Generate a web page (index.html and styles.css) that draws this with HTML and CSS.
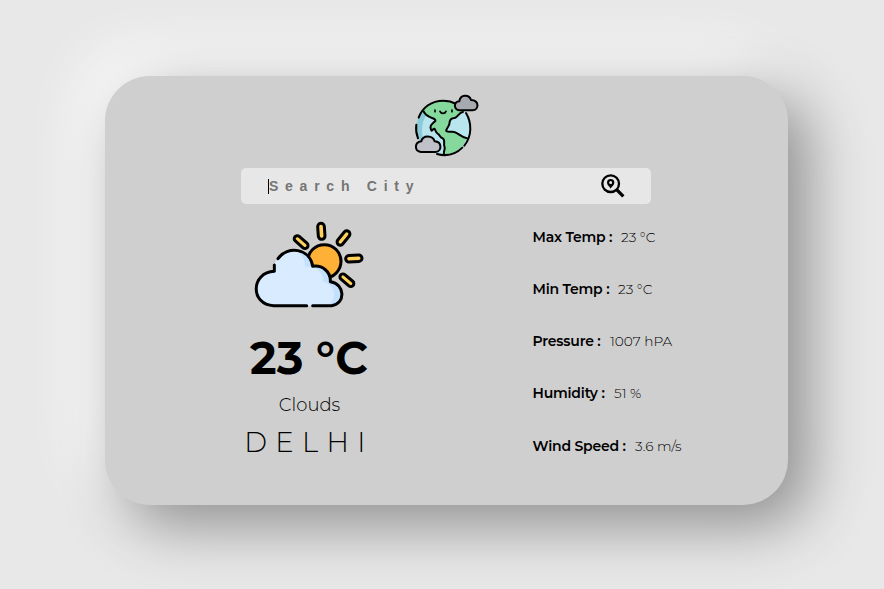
FILE: index.html
```html
<!DOCTYPE html>
<html lang="en">
<head>
<meta charset="utf-8">
<title>Weather</title>
<link rel="stylesheet" href="styles.css">
</head>
<body>
<main class="card">
  <svg class="logo" viewBox="0 0 255 225" fill="none" stroke="#000" stroke-width="6" stroke-linecap="round" stroke-linejoin="round">
    <circle cx="115" cy="119" r="81" fill="#b9e6ee" stroke="none"/>
    <path d="M52 68C26 102 29 150 58 177L64 176C47 145 46 106 66 78Z" fill="#8bcbd9" stroke="none"/>
    <path d="M55 68C70 45 92 38 116 38C137 38 157 45 172 58L172 73C159 75 158 87 147 90C136 91 133 100 133 109C131 117 125 121 124 129C131 134 142 129 151 132C164 137 174 148 185 151C174 181 148 199 118 200C113 190 122 182 118 174C118 164 121 157 114 150C105 146 100 141 96 131C89 128 91 120 83 128L80 130C72 120 78 112 85 106C94 100 94 95 84 92C71 91 59 82 55 68Z" fill="#86d99d" stroke="none"/>
    <path d="M41 89C52 58 80 38 115 38C130 38 143 42 154 48M183 75C201 105 201 145 178 173M172 179C151 200 122 205 96 198M34 110C32 124 34 138 39 151"/>
    <path d="M56 70C60 80 67 84 77 88C84 92 93 93 91 99C82 108 74 111 77 121C80 135 81 124 88 122C92 125 92 134 98 137C105 140 105 150 113 151C122 158 115 167 118 174C123 184 114 189 117 199M174 72C161 74 160 86 149 90C136 90 133 98 133 109C131 117 122 123 124 129C131 135 142 128 151 133C164 139 171 149 186 151"/>
    <path stroke-width="5" d="M90 66V71M141 66V71M105 70C108 78 120 78 123 70"/>
    <path d="M165 67C146 67 144 40 163 40C166 18 193 19 198 36C224 37 222 66 203 67Z" fill="#a7a9b1"/>
    <path d="M48 192C28 189 27 163 49 160C54 140 83 142 89 160C112 162 111 190 92 192Z" fill="#bfc0c8"/>
  </svg>
  <div class="search">
    <span class="caret"></span>
    <span class="placeholder">Search City</span>
    <svg class="lens" viewBox="0 0 72 72" fill="none" stroke="#000">
      <circle cx="29" cy="29" r="25" stroke-width="7"/>
      <path d="M47 47L67 67" stroke-width="10"/>
      <path d="M29 44C27 38 18 33 18 26A11 11 0 0 1 40 26C40 33 31 38 29 44ZM29 21A4.500 4.500 0 1 0 29 30A4.500 4.500 0 1 0 29 21Z" fill="#000" fill-rule="evenodd" stroke="none"/>
    </svg>
  </div>
  <div class="content">
    <section class="current">
      <svg class="weather" viewBox="0 0 390 300" stroke="#000" stroke-width="9" stroke-linecap="round" stroke-linejoin="round">
        <circle cx="238" cy="139" r="50" fill="#ffb137"/>
        <g fill="#ffd15b">
          <rect x="219" y="25" width="20" height="48" rx="10" transform="rotate(-4 229 49)"/>
          <rect x="286" y="44" width="19" height="50" rx="9.5" transform="rotate(39 295.500 69)"/>
          <rect x="159" y="57" width="18" height="49" rx="9" transform="rotate(-49 168 81)"/>
          <rect x="302" y="121" width="49" height="19" rx="9.500" transform="rotate(-3 326.500 130.500)"/>
          <rect x="281" y="187" width="49" height="18" rx="9" transform="rotate(40 306 196)"/>
        </g>
        <path d="M86 272C17 272 16 171 89 168C86 129 112 107 145 107C174 107 194 126 203 154C232 149 258 171 256 200C300 205 303 267 260 272Z" fill="#c4e0ff" stroke="none"/>
        <path d="M86 272C17 272 16 171 89 168C86 129 112 107 145 107C167 110 178 127 181 156C212 151 236 173 234 200C278 211 277 264 239 272Z" fill="#d9ecff" stroke="none"/>
        <path d="M88 150V169C17 172 15 269 86 272H185M99 131C127 91 195 99 203 154C232 149 258 171 256 200C300 205 303 267 260 272H203" fill="none"/>
      </svg>
      <div class="temperature">23 °C</div>
      <div class="condition">Clouds</div>
      <div class="city">DELHI</div>
    </section>
    <dl class="details">
      <div class="row max"><dt>Max Temp :</dt><dd>23 °C</dd></div>
      <div class="row min"><dt>Min Temp :</dt><dd>23 °C</dd></div>
      <div class="row pressure"><dt>Pressure :</dt><dd>1007 hPA</dd></div>
      <div class="row humidity"><dt>Humidity :</dt><dd>51 %</dd></div>
      <div class="row wind"><dt>Wind Speed :</dt><dd>3.6 m/s</dd></div>
    </dl>
  </div>
</main>
</body>
</html>
```
FILE: styles.css
```css
* { box-sizing: border-box; }
body {
  margin: 0;
  height: 589px;
  padding: 76px 96px 84px 105px;
  background: #e8e8e8;
  color: #000;
  font-family: Montserrat, Inter, sans-serif;
  overflow: hidden;
}
.card {
  width: 683px;
  height: 429px;
  padding-top: 12px;
  border-radius: 45px;
  background: #cfcfcf;
  box-shadow: 20px 20px 60px #8e8e8e, -20px -20px 60px #fff;
  display: flex;
  flex-direction: column;
}
.logo {
  width: 85px;
  height: 75px;
  margin-left: 300px;
  flex: none;
}
.search {
  width: 410px;
  height: 36px;
  margin: 5px 0 0 136px;
  padding: 0 27px;
  border-radius: 5px;
  background: #e7e7e7;
  display: flex;
  align-items: center;
  flex: none;
}
.caret { width: 1px; height: 15px; background: #000; }
.placeholder {
  color: #757575;
  font: bold 14px/16px "Liberation Sans", sans-serif;
  letter-spacing: 6.75px;
  white-space: nowrap;
}
.lens { width: 24px; height: 24px; margin: 0 -1px 0 auto; }
.content { display: flex; margin-top: 11px; }
.current {
  width: 130px;
  margin-left: 140px;
  display: flex;
  flex-direction: column;
  align-items: center;
  white-space: nowrap;
}
.weather { width: 130px; height: 100px; }
.temperature { margin: 15px 2px 0 0; font-size: 45px; line-height: 56px; font-weight: 700; }
.condition { margin: 7px 1px 0 0; font-size: 18px; line-height: 24px; font-weight: 300; }
.city { margin: 9px 2px 0 0; font-size: 27.5px; line-height: 32px; font-weight: 300; letter-spacing: 8.4px; }
.details { margin: 12.8px 0 0 157.5px; }
.row {
  height: 52.2px;
  display: flex;
  font-size: 13.7px;
  line-height: 18px;
  white-space: nowrap;
}
dt { font-size: 14px; font-weight: 600; letter-spacing: -0.2px; }
dd { margin: 0; font-weight: 300; }
.max dt { width: 88.5px; }
.min dt { width: 85.5px; }
.pressure dt { width: 77.5px; }
.humidity dt { width: 81.5px; }
.wind dt { width: 102.5px; }
```
